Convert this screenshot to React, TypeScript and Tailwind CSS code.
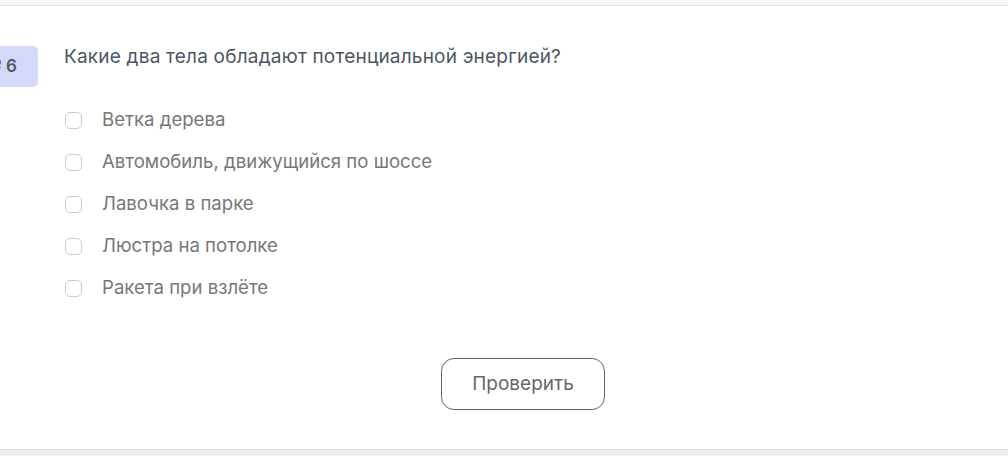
import React from "react";

const options = [
  "Ветка дерева",
  "Автомобиль, движущийся по шоссе",
  "Лавочка в парке",
  "Люстра на потолке",
  "Ракета при взлёте",
];

export default function App() {
  return (
    <div className="w-[1008px] h-[456px] overflow-hidden flex flex-col bg-[#efefef]" style={{ fontFamily: "Inter, 'Noto Sans', sans-serif" }}>
      <div className="h-[5px] bg-[#f7f7f7] shrink-0" />
      <div className="h-[445px] bg-white border-t border-b border-[#e0e0e0] flex shrink-0">
        <div className="w-[64px] shrink-0 pt-[40px]">
          <div className="w-[38px] h-[41px] bg-[#d5d9f7] rounded-r-[5px] flex items-center justify-end pr-[21px] text-[17px] font-semibold text-[#555a66] overflow-hidden whitespace-nowrap">
            № 6
          </div>
        </div>
        <div className="flex-1 pr-[26px] pt-[38px] flex flex-col">
          <div className="text-[19px] leading-[26px] text-[#4c5663] tracking-[0.2px]">
            Какие два тела обладают потенциальной энергией?
          </div>
          <div className="mt-[29px] flex flex-col">
            {options.map((o) => (
              <label key={o} className="h-[42px] flex items-center">
                <span className="w-[17px] h-[17px] border border-[#cccccc] rounded-[5px] ml-[1px] mr-[20px] shrink-0" />
                <span className="text-[18.6px] text-[#777777]">{o}</span>
              </label>
            ))}
          </div>
          <div className="mt-[49px] flex justify-center">
            <button className="w-[164px] h-[52px] border border-[#666] rounded-[13px] text-[19px] text-[#666] bg-white">
              Проверить
            </button>
          </div>
        </div>
      </div>
    </div>
  );
}
